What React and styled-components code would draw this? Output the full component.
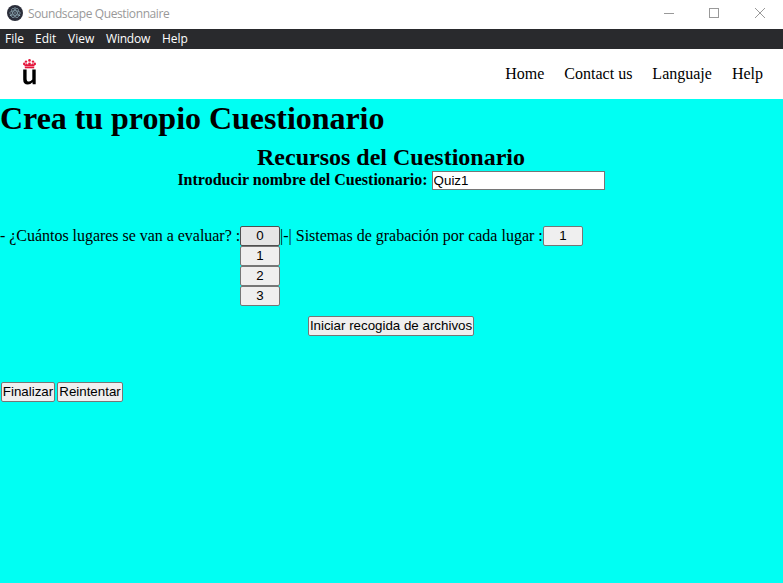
import React, { useState } from 'react';
import styled, { createGlobalStyle } from 'styled-components';

const GlobalStyle = createGlobalStyle`
  * { box-sizing: border-box; }
  html, body { margin: 0; height: 100%; overflow: hidden; }
  body { background: #00fff3; color: #000; font: 16px/18px "Liberation Serif", serif; }
  h1, h2 { margin: 0; }
`;

const Page = styled.div`
  display: flex;
  flex-direction: column;
  height: 583px;
  white-space: nowrap;
`;

const TitleBar = styled.header`
  display: flex;
  align-items: center;
  height: 29px;
  padding-left: 7px;
  background: #fff;
  color: #999;
  font: 12px/16px "Open Sans", sans-serif;
`;

const AppIcon = styled.svg`
  width: 16px;
  height: 16px;
  margin-bottom: 3px;
`;

const WindowTitle = styled.span`
  flex: 1;
  margin: 0 0 1px 5px;
  letter-spacing: -0.4px;
`;

const WindowControls = styled.div`
  display: flex;
  height: 100%;
`;

const ControlIcon = styled.svg`
  width: 46px;
  height: 27px;
  fill: none;
  stroke: #999;
`;

const MenuBar = styled.nav`
  display: flex;
  gap: 12px;
  height: 20px;
  padding-left: 5px;
  background: #292a2d;
  color: #fff;
  font: 12px/20px "Open Sans", sans-serif;
`;

const MenuItem = styled.span`
  width: ${(p) => p.$width}px;
  letter-spacing: ${(p) => p.$spacing || 0}px;
`;

const SiteHeader = styled.div`
  display: flex;
  align-items: center;
  justify-content: space-between;
  height: 50px;
  padding: 0 20px 0 22px;
  background: #fff;
`;

const SiteNav = styled.nav`
  display: flex;
  gap: 20px;
`;

const Content = styled.main`
  flex: 1;
  background: #00fff3;
`;

const Heading = styled.h1`
  padding-top: 1px;
  font-size: 32px;
  line-height: 37px;
  letter-spacing: -0.04px;
`;

const Subheading = styled.h2`
  margin: 7px 1px 0 0;
  font-size: 24px;
  line-height: 27px;
  text-align: center;
`;

const NameField = styled.label`
  display: flex;
  justify-content: center;
  align-items: flex-start;
  gap: 4px;
  height: 20px;
  padding-right: 1px;
  font-weight: bold;
`;

const NameInput = styled.input`
  width: 173px;
  height: 19px;
  padding: 1px;
  border: 1px solid #767676;
  background: #fff;
  color: #000;
  font: 13.333px/15px "Liberation Sans", sans-serif;
`;

const Options = styled.div`
  display: flex;
  align-items: flex-start;
  margin-top: 35px;
`;

const Question = styled.span`
  width: ${(p) => p.$width}px;
  line-height: 20px;
  letter-spacing: ${(p) => p.$spacing || 0}px;
`;

const Choices = styled.div`
  display: flex;
  flex-direction: column;
`;

const Button = styled.button`
  width: ${(p) => p.$width}px;
  height: 20px;
  padding: 0;
  border: 1px solid ${(p) => (p.$selected ? '#4f4f4f' : '#767676')};
  border-radius: 2px;
  background: ${(p) => (p.$selected ? '#e5e5e5' : '#efefef')};
  color: #000;
  font: 13.333px/16px "Liberation Sans", sans-serif;
`;

const StartRow = styled.div`
  display: flex;
  justify-content: center;
  margin-top: 10px;
  padding-right: 1px;
`;

const Actions = styled.div`
  display: flex;
  gap: 2px;
  margin: 46px 0 0 1px;
`;

const AtomIcon = () => (
  <AppIcon viewBox="0 0 16 16">
    <circle cx="8" cy="8" r="8" fill="#2b2e3a" />
    <g fill="none" stroke="#a9cbd5" strokeWidth="0.65" opacity="0.85">
      <ellipse cx="8" cy="8" rx="5.2" ry="2.2" />
      <ellipse cx="8" cy="8" rx="5.2" ry="2.2" transform="rotate(60 8 8)" />
      <ellipse cx="8" cy="8" rx="5.2" ry="2.2" transform="rotate(120 8 8)" />
    </g>
    <g fill="#a9cbd5">
      <circle cx="8" cy="8" r="0.7" />
      <circle cx="3.4" cy="10.3" r="0.6" />
      <circle cx="12.6" cy="10.3" r="0.6" />
      <circle cx="8" cy="2.8" r="0.6" />
    </g>
  </AppIcon>
);

const UniversityLogo = () => (
  <svg width="16" height="30" viewBox="0 0 16 30">
    <g fill="#e4153b">
      <circle cx="7.5" cy="1.4" r="1.3" />
      <circle cx="4" cy="2.6" r="1.2" />
      <circle cx="11" cy="2.6" r="1.2" />
      <circle cx="2.3" cy="4.9" r="1.3" />
      <circle cx="12.7" cy="4.9" r="1.3" />
      <circle cx="7.5" cy="4.7" r="1.3" />
      <path d="M2 5L4 5.6L4.6 4L6 5.8L7.5 4L9 5.8L10.4 4L11 5.6L13 5L12.2 7.4H2.8Z" />
      <rect x="2.8" y="7.9" width="9.4" height="1.4" />
    </g>
    <path d="M1.2 10.6H4.6V19.4Q4.6 22.6 7 22.6Q8.8 22.6 10.3 20.6V10.6H13.7V25.2H10.7L10.4 23.3Q8.6 25.5 5.8 25.5Q1.2 25.5 1.2 20.4Z" fill="#000" />
  </svg>
);

const menus = [
  { label: 'File', width: 18 },
  { label: 'Edit', width: 21 },
  { label: 'View', width: 26 },
  { label: 'Window', width: 44, spacing: -0.2 },
  { label: 'Help', width: 26 },
];

export default function App() {
  const [name, setName] = useState('Quiz1');
  const [places, setPlaces] = useState(0);
  return (
    <Page>
      <GlobalStyle />
      <TitleBar>
        <AtomIcon />
        <WindowTitle>Soundscape Questionnaire</WindowTitle>
        <WindowControls>
          <ControlIcon><path d="M19 13.5H29" /></ControlIcon>
          <ControlIcon><rect x="18.5" y="8.5" width="9" height="9" /></ControlIcon>
          <ControlIcon><path d="M18 8L28 18M28 8L18 18" /></ControlIcon>
        </WindowControls>
      </TitleBar>
      <MenuBar>
        {menus.map((m) => (
          <MenuItem key={m.label} $width={m.width} $spacing={m.spacing}>{m.label}</MenuItem>
        ))}
      </MenuBar>
      <SiteHeader>
        <UniversityLogo />
        <SiteNav>
          <span>Home</span><span>Contact us</span><span>Languaje</span><span>Help</span>
        </SiteNav>
      </SiteHeader>
      <Content>
        <Heading>Crea tu propio Cuestionario</Heading>
        <Subheading>Recursos del Cuestionario</Subheading>
        <NameField>
          Introducir nombre del Cuestionario:
          <NameInput value={name} onChange={(e) => setName(e.target.value)} />
        </NameField>
        <Options>
          <Question $width={240} $spacing={-0.03}>- ¿Cuántos lugares se van a evaluar? :</Question>
          <Choices>
            {[0, 1, 2, 3].map((n) => (
              <Button key={n} $width={40} $selected={n === places} onClick={() => setPlaces(n)}>{n}</Button>
            ))}
          </Choices>
          <Question $width={263}>|-| Sistemas de grabación por cada lugar :</Question>
          <Button $width={40}>1</Button>
        </Options>
        <StartRow><Button $width={166}>Iniciar recogida de archivos</Button></StartRow>
        <Actions>
          <Button $width={54}>Finalizar</Button>
          <Button $width={66}>Reintentar</Button>
        </Actions>
      </Content>
    </Page>
  );
}
